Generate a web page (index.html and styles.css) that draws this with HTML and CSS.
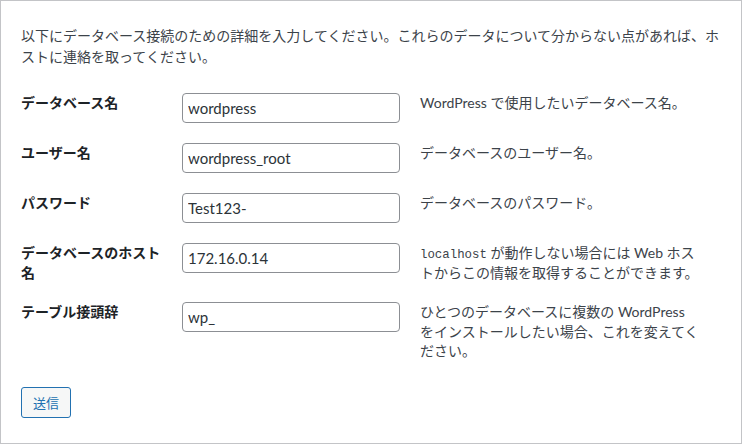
FILE: index.html
```html
<!DOCTYPE html>
<html lang="ja">
<head>
<meta charset="utf-8">
<title>WordPress › セットアップ設定ファイル</title>
<link rel="stylesheet" href="styles.css">
</head>
<body>
<div class="setup">
  <p class="intro">以下にデータベース接続のための詳細を入力してください。これらのデータについて分からない点があれば、ホストに連絡を取ってください。</p>
  <form class="form-table">
    <label class="th" for="dbname">データベース名</label>
    <div class="td"><input id="dbname" type="text" value="wordpress"></div>
    <div class="desc">WordPress で使用したいデータベース名。</div>

    <label class="th" for="uname">ユーザー名</label>
    <div class="td"><input id="uname" type="text" value="wordpress_root"></div>
    <div class="desc">データベースのユーザー名。</div>

    <label class="th" for="pwd">パスワード</label>
    <div class="td"><input id="pwd" type="text" value="Test123-"></div>
    <div class="desc">データベースのパスワード。</div>

    <label class="th" for="dbhost">データベースのホスト名</label>
    <div class="td"><input id="dbhost" type="text" value="172.16.0.14"></div>
    <div class="desc"><code>localhost</code> が動作しない場合には Web ホストからこの情報を取得することができます。</div>

    <label class="th" for="prefix">テーブル接頭辞</label>
    <div class="td"><input id="prefix" type="text" value="wp_"></div>
    <div class="desc">ひとつのデータベースに複数の WordPress をインストールしたい場合、これを変えてください。</div>
  </form>
  <p class="step"><button class="button" type="button">送信</button></p>
</div>
</body>
</html>
```
FILE: styles.css
```css
html, body {
  margin: 0;
  padding: 0;
  background: #fff;
}

body {
  font-family: "Lato", "Noto Sans CJK JP", sans-serif;
  font-size: 14px;
  color: #3c434a;
}

.setup {
  border: 1px solid #c3c4c7;
  padding: 20px 20px 10px;
}

.intro {
  margin: 4px 0 0;
  padding-bottom: 2px;
  line-height: 21px;
}

.form-table {
  margin-top: 14px;
  display: grid;
  grid-template-columns: 141px 218px 281px;
  column-gap: 20px;
  row-gap: 20px;
  padding: 10px 0;
  align-items: start;
}

.th {
  font-weight: bold;
  color: #1d2327;
  line-height: 19.6px;
}

.desc {
  line-height: 19.6px;
}

.desc code {
  font-family: "Liberation Mono", monospace;
  font-size: 12.4px;
  line-height: 1;
  color: #3c434a;
}

.td input {
  display: block;
  box-sizing: border-box;
  width: 218px;
  height: 30px;
  margin: 0;
  padding: 0 5px;
  border: 1px solid #8c8f94;
  border-radius: 4px;
  background: #fff;
  color: #2c3338;
  font-family: "Lato", "Noto Sans CJK JP", sans-serif;
  font-size: 15px;
}

.step {
  margin: 16px 0 15px;
}

.button {
  display: block;
  box-sizing: border-box;
  height: 31px;
  padding: 0 11px;
  border: 1px solid #2271b1;
  border-radius: 3px;
  background: #f6f7f7;
  color: #2271b1;
  font-family: "Noto Sans CJK JP", sans-serif;
  font-size: 13px;
  cursor: pointer;
}
```
